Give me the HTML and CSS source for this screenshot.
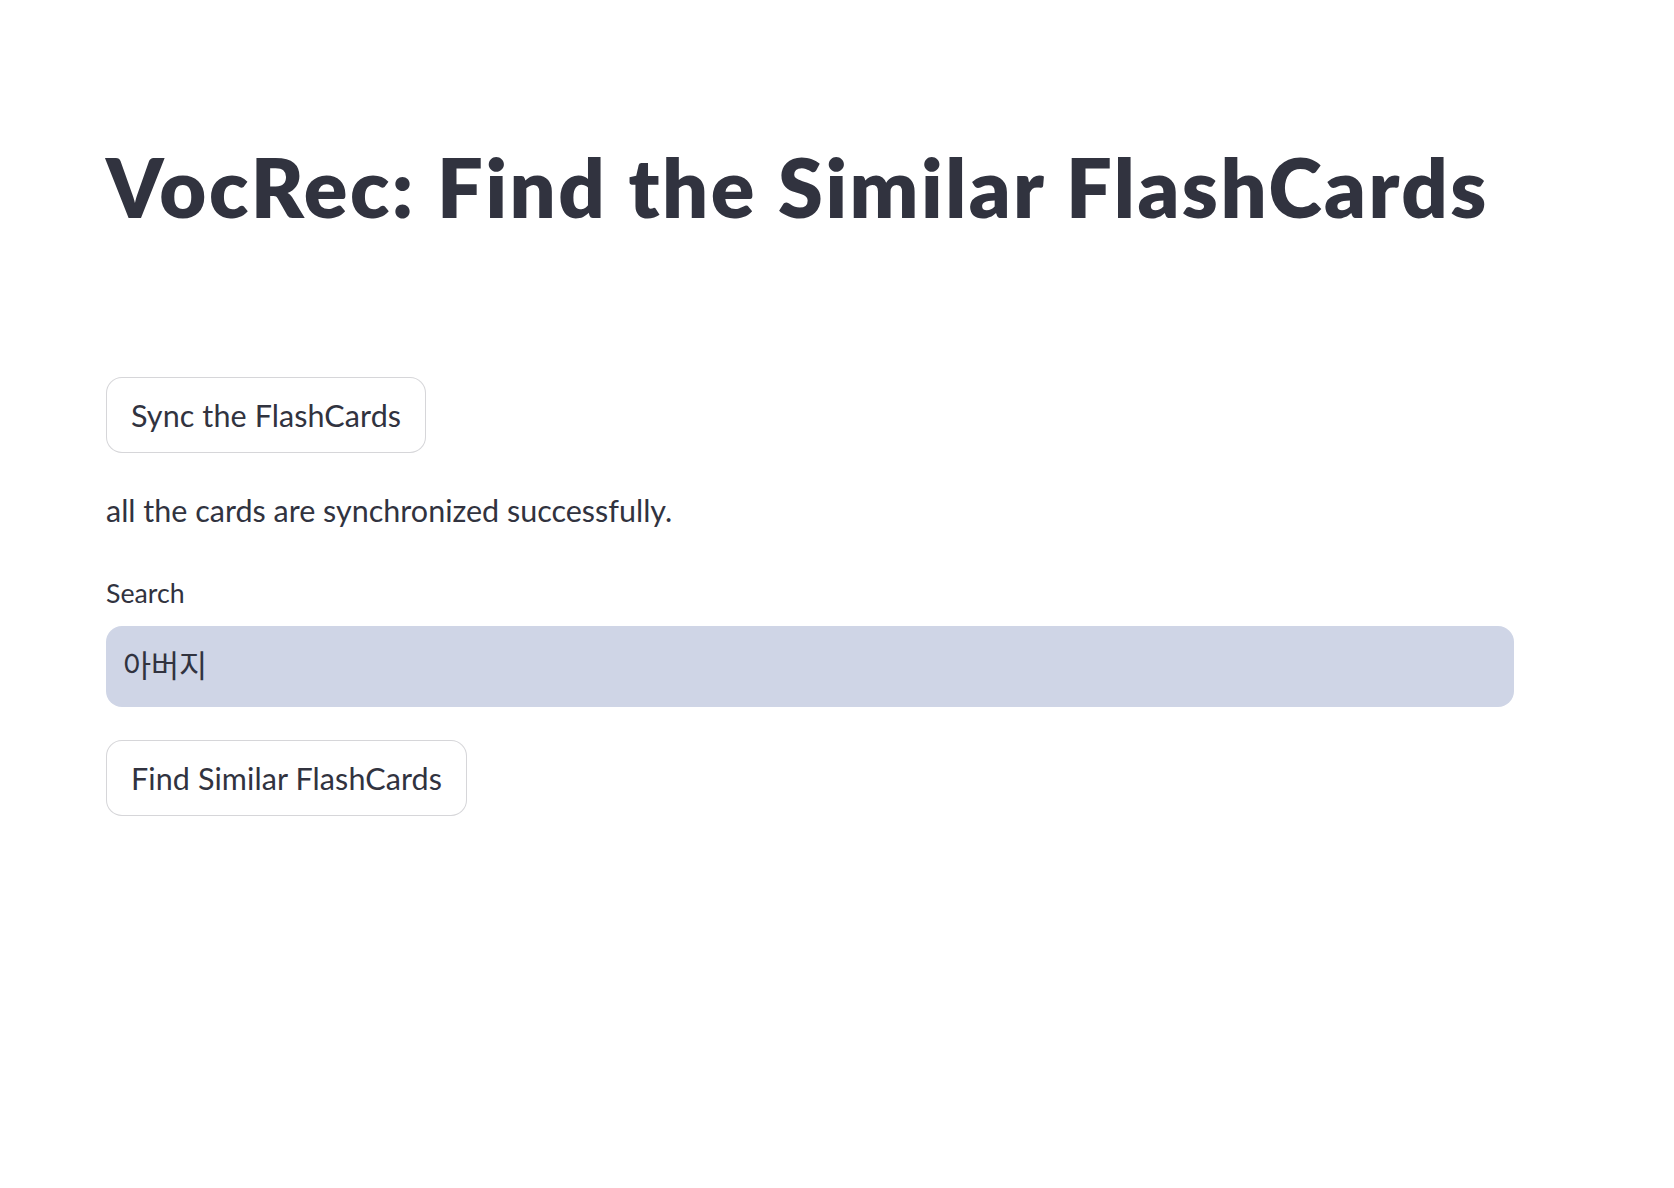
FILE: index.html
```html
<!DOCTYPE html>
<html lang="en">
<head>
<meta charset="utf-8">
<title>VocRec</title>
<link rel="stylesheet" href="styles.css">
</head>
<body>
<main class="block">
  <h1 class="title">VocRec: Find the Similar FlashCards</h1>
  <div class="stack">
    <button class="btn" type="button">Sync the FlashCards</button>
    <p class="msg">all the cards are synchronized successfully.</p>
    <div class="field">
      <label class="label" for="search">Search</label>
      <div class="input-wrap"><input id="search" class="input" type="text" value="아버지"></div>
    </div>
    <button class="btn btn-find" type="button">Find Similar FlashCards</button>
  </div>
</main>
</body>
</html>
```

FILE: styles.css
```css
html, body {
  margin: 0;
  padding: 0;
  background: #ffffff;
}
body {
  font-family: "Lato", "Noto Sans CJK KR", sans-serif;
  color: #31333f;
}
.block {
  width: 1408px;
  padding: 138px 0 0 106px;
}
.title {
  margin: 0;
  font-size: 81px;
  line-height: 97px;
  font-weight: 800;
  letter-spacing: 2.5px;
  color: #31333f;
}
.stack {
  margin-top: 142px;
  display: flex;
  flex-direction: column;
  align-items: flex-start;
  gap: 32px;
}
.btn {
  height: 76px;
  padding: 0 24px;
  border: 1px solid rgba(49, 51, 63, 0.2);
  border-radius: 16px;
  background: #ffffff;
  font-family: inherit;
  font-size: 30.5px;
  letter-spacing: 0.1px;
  color: #31333f;
  line-height: 1;
}
.btn-find {
  margin-top: 1px;
}
.msg {
  margin: 0;
  font-size: 30.5px;
  line-height: 51px;
}
.field {
  margin-top: 3px;
  width: 100%;
  display: flex;
  flex-direction: column;
  gap: 10px;
}
.label {
  font-size: 26.7px;
  line-height: 45px;
}
.input-wrap {
  height: 81px;
  box-sizing: border-box;
  border-radius: 16px;
  background: #cfd5e6;
  display: flex;
  align-items: center;
}
.input {
  width: 100%;
  border: 0;
  outline: none;
  background: transparent;
  padding: 0 17px 6px;
  font-family: "Noto Sans CJK KR", sans-serif;
  font-size: 30.5px;
  color: #31333f;
}
```
